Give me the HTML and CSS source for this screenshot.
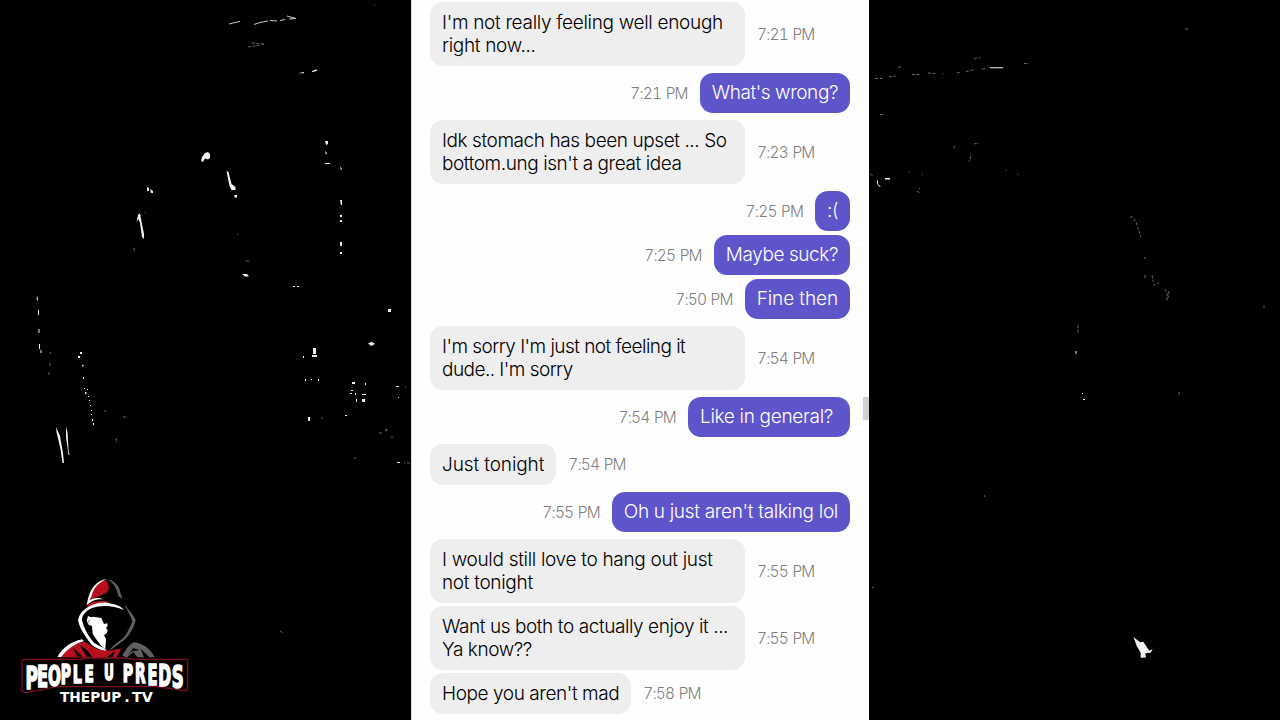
FILE: index.html
```html
<!DOCTYPE html>
<html lang="en">
<head>
    <meta charset="UTF-8">
    <meta name="viewport" content="width=device-width, initial-scale=1.0">
    <title>Chat</title>
    <link rel="stylesheet" href="styles.css">
</head>
<body>
    <div class="stage">
        <!-- light specks on the dark backdrop -->
        <svg class="backdrop" width="1280" height="720" viewBox="0 0 1280 720">
            <g class="bright">
                <path d="M201 161l1-4 3-4 3-1 2 2 0 4-2 1.500-3-1-2 3.500z"/>
                <path d="M226.500 171l2 1 3 12 4 3 0 3-4 0-2-4z"/>
                <path d="M234.500 195h2.500v2.500h-2.500zM136.500 222l1.500-7 2-2 1 6 3 15 0 5-2-2-2-14-1.500-4z"/>
                <path d="M242 274l5 0 2 2.500-4 0zM147 187l2 1v3h-2zM150 189l3 2v2h-2zM293 286h2v1h-2zM297 286h2v1h-2z"/>
                <path d="M312 71l4-1.500 2 .5-3 1.500-3 .5zM299 73l5-1v1.300h-5z"/>
                <path d="M325 141h3v3l-2 1zM325 151l2 2-1 2zM325 163h5v1h-5zM340 166l2 3-1 1zM340 200h2v5h-1zM340 215h2v2h-2zM340 220h2v2h-2zM340 242h2v3l-1 2-1-2zM340 252h2v2h-2z"/>
                <path d="M313 348h3v6h-3zM312 355h5v2h-5zM303 356h1v2h-1zM305 379h1v2h-1zM311 379h1v1h-1zM318 379h1v2h-1zM308 417h2v4h-2zM388 309h3v3h-3zM368 343l4-1 3 2-4 2z"/>
                <path d="M352 382h3v2h-3zM351 390h2v1h-2zM350 393h2v1h-2zM355 393h1v2h-1zM362 394h4v1h-4zM362 399h3v3h-3zM356 399h1v3h-1zM365 383h1v2h-1zM345 415h2v1h-2zM396 386h3v1h-3zM398 397h1v1h-1zM397 462h3v1h-3z"/>
                <path d="M56 427l4 9 3 17 1 10-1.500 0-2-14-4-17zM66 427l1.500 5 1 18 1 5-1 0-2.500-18z"/>
                <path d="M36.500 298l1-2 .5 5-1-1zM38 310h1v5h-1zM38.500 329h1v4h-1zM39 344h1v5h-1zM40.500 350h1v3h-1z"/>
                <path d="M80 352h2v2h-2zM78 356h2v2h-2zM82 365h1.500v1.500h-1.500zM83 377h1v2h-1zM84 388h1v1h-1zM87 389h1v1h-1zM85 392h1.500v2h-1.500zM88 396h1v1h-1zM89 400h1v1h-1zM90 405h1v1h-1zM91 410h1v1h-1zM91 414h1v1h-1zM92 419h1v2h-1zM93 423h1v2h-1z"/>
                <path d="M877 180l1 1 0 3 3 3-2-.5-2-3zM885 178h5v1.500h-5zM990 67.300h13v1h-13z"/>
                <path d="M1133.500 637l6.500 5.300 3.300-.6 6 9 3.400-1.700-2 3.700-5.400.6.700 4.200-5.300.2 0-5-4-6.700z"/>
                <path d="M1075.500 351h1v3h-1zM1082 393h1v1h-1zM1083 399h2v1h-2z"/>
            </g>
            <g class="streak">
                <path d="M254 24.500l6-2 8-1.500M270 20.500l7 .5M280 20.500l5-1M289 19l7-.5-9-2.500M229 24l6-1.500 5-1"/>
                <path class="dim" d="M248 47l16-2.500M252 43l12 1M374 5l1 0M134 248l.5 3M246 261l4 0M237 234l1 1M145 212l1 1"/>
                <path class="dim" d="M875 78.500h8M889 77l7-1M898 67h4M912 74.500h8M928 73l8 .5M943 73v1M957 73l4-1M966 71.500l9-2M982 69l3 0M1024 63.500h5M974 59l6-1.500M880 114.500h5"/>
                <path class="dim" d="M953 148l3-2M974 144l5-1M971 156l-2 6M970 154l1 1M909 172l1 1M922 174l1 1M917 191l3 2M920 188l-1 1M1006 170v1M1018 174v1M870 174l4 2"/>
                <path class="dim" d="M1130 217l2 0 4 5 2 6 3 9M1145 257v2M1145 275v3M1152 275l2 10 5-2M1165 289l2 4v8M1169 291l-1 7M1078 325v9M1264 305v4M1179 392v3M1185 29l3 0M984 495l1 2M872 587l2 1"/>
                <path class="dim" d="M50 352l1 2M50 363v3M49 372v3M105 410v2M123 417h5M116 438l1 5M379 433h4M385 431l3-1M386 428v4M392 436v2M405 387h1M410 463h-6M321 418h2M354 458h2M280 631l3 2"/>
            </g>
        </svg>

        <main class="chat">
            <div class="message received">
                <div class="bubble long">I'm not really feeling well enough<br>right now...</div>
                <span class="time">7:21 PM</span>
            </div>
            <div class="message sent">
                <span class="time">7:21 PM</span>
                <div class="bubble tight">What's wrong?</div>
            </div>
            <div class="message received">
                <div class="bubble long tight">Idk stomach has been upset ... So<br>bottom.ung isn't a great idea</div>
                <span class="time">7:23 PM</span>
            </div>
            <div class="message sent">
                <span class="time">7:25 PM</span>
                <div class="bubble tighter">:(</div>
            </div>
            <div class="message sent">
                <span class="time">7:25 PM</span>
                <div class="bubble tight">Maybe suck?</div>
            </div>
            <div class="message sent">
                <span class="time">7:50 PM</span>
                <div class="bubble wide">Fine then</div>
            </div>
            <div class="message received">
                <div class="bubble long tighter">I'm sorry I'm just not feeling it<br>dude.. I'm sorry</div>
                <span class="time">7:54 PM</span>
            </div>
            <div class="message sent">
                <span class="time">7:54 PM</span>
                <div class="bubble">Like in general?&nbsp;</div>
            </div>
            <div class="message received">
                <div class="bubble wide">Just tonight</div>
                <span class="time">7:54 PM</span>
            </div>
            <div class="message sent">
                <span class="time">7:55 PM</span>
                <div class="bubble">Oh u just aren't talking lol</div>
            </div>
            <div class="message received">
                <div class="bubble long">I would still love to hang out just<br>not tonight</div>
                <span class="time">7:55 PM</span>
            </div>
            <div class="message received">
                <div class="bubble long tight">Want us both to actually enjoy it ...<br>Ya know??</div>
                <span class="time">7:55 PM</span>
            </div>
            <div class="message received">
                <div class="bubble tight">Hope you aren't mad</div>
                <span class="time">7:58 PM</span>
            </div>
            <div class="scrollbar"></div>
        </main>

        <svg class="logo" width="190" height="140" viewBox="0 0 570 420">
            <!-- shoulders -->
            <path class="red" d="M150 262C168 236 192 222 222 215L262 238 292 242 334 236 318 264Z"/>
            <path class="black" d="M188 232l30 28h-16zM208 224c20 12 32 24 38 38h-14zM290 262l24-20-6 20z"/>
            <path class="white" d="M142 261C158 232 184 215 216 208L222 213C194 222 172 236 153 262Z"/>
            <path class="grey" d="M336 258C348 238 358 223 371 217 398 220 422 236 434 262H418L392 236 402 262H382L370 246 352 262Z"/>
            <path class="black" d="M352 258l18-24 18 6-22 4z"/>
            <!-- hood -->
            <path class="black" d="M236 90C245 50 262 30 290 26 330 40 332 70 340 92 366 120 380 150 368 175L300 242 220 180 208 140Z"/>
            <path class="red" d="M242 84C246 54 262 36 287 30 299 44 299 60 290 68 270 76 256 82 242 92ZM234 104C246 94 266 92 288 94L300 100C270 98 248 102 230 114Z"/>
            <path class="white" d="M230 106C236 60 258 30 292 26 268 36 250 52 244 80L238 90 C256 82 268 82 280 88 256 86 242 94 228 108Z"/>
            <path class="white" d="M204 150C212 116 250 96 290 98 316 102 334 108 342 120 310 106 274 104 246 114 226 124 216 136 216 150 222 178 238 202 252 218 270 230 284 232 290 242 266 240 246 230 234 210 220 190 208 172 204 150Z"/>
            <path class="grey" d="M292 27C318 34 328 50 331 68L338 88 325 78C320 56 312 40 292 27ZM342 98C356 122 372 136 377 150 370 180 352 206 334 216 322 226 310 234 298 242 310 224 326 216 342 202 354 184 364 166 367 152 360 134 350 120 342 98Z"/>
            <!-- face -->
            <path class="white" d="M234 138L243 142 250 140 274 144 282 162 292 160 293 168 288 174 293 180 290 190 282 196 288 206 286 238 274 228 262 212 248 192 246 168 236 164 230 152Z"/>
            <path class="black" d="M243 146l-8 8 4 10-2-10z"/>
            <!-- name plate -->
            <path class="plate" d="M44 268H210L230 264H350L370 268H528Q534 270 533 278V356Q532 362 524 362L440 350H140L50 368Q36 368 36 358V276Q36 269 44 268Z"/>
            <text class="name" transform="scale(.58 1)">
                <tspan x="80" y="356" font-size="98">P</tspan><tspan x="140" y="352" font-size="93">E</tspan><tspan x="196" y="347" font-size="87">O</tspan><tspan x="263" y="342" font-size="80">P</tspan><tspan class="broad" x="324" y="338" font-size="74">L</tspan><tspan class="broad" x="385" y="335" font-size="71">E</tspan> <tspan class="broad" x="486" y="330" font-size="63">U</tspan> <tspan class="broad" x="583" y="336" font-size="73">P</tspan><tspan x="646" y="340" font-size="79">R</tspan><tspan x="711" y="344" font-size="84">E</tspan><tspan x="767" y="349" font-size="89">D</tspan><tspan x="837" y="354" font-size="95">S</tspan>
            </text>
            <text class="site"><tspan x="150" y="395" textLength="184" lengthAdjust="spacingAndGlyphs">THEPUP</tspan><tspan x="343">.</tspan><tspan x="366">T</tspan><tspan x="395">V</tspan></text>
        </svg>
    </div>
</body>
</html>
```
FILE: styles.css
```css
:root {
    --sent: #5f55cb;
    --received: #eeeeee;
    --time: #808080;
}

* {
    box-sizing: border-box;
}

body {
    margin: 0;
    background: #000;
    font-family: Inter, "Liberation Sans", sans-serif;
}

.stage {
    position: relative;
    width: 1280px;
    height: 720px;
    overflow: hidden;
    background: #000;
}

.backdrop {
    position: absolute;
    left: 0;
    top: 0;
}

.bright {
    fill: #f2f2f2;
}

.streak {
    fill: none;
    stroke: #c8c8c8;
    stroke-width: 1;
}

.dim {
    stroke: #666;
    stroke-dasharray: 3 1.5;
}

.chat {
    position: relative;
    width: 458px;
    height: 720px;
    margin-left: 411px;
    padding: 2px 19px 0 18px;
    background: #fefefe;
    border-left: 1px solid #dedede;
}

.message {
    display: flex;
    align-items: center;
    gap: 12px;
    margin-bottom: 3.5px;
}

.sent {
    justify-content: flex-end;
}

.received + .sent,
.sent + .received {
    margin-top: 7px;
}

.bubble {
    padding: 8.75px 12px;
    border-radius: 13px;
    font-size: 19px;
    font-weight: 330;
    line-height: 23px;
    letter-spacing: -0.31px;
    white-space: nowrap;
}

.received .bubble {
    background: var(--received);
    color: #000;
}

.sent .bubble {
    background: var(--sent);
    color: #fff;
}

.long {
    width: 315px;
}

.bubble.tight {
    letter-spacing: -0.42px;
}

.bubble.tighter {
    letter-spacing: -0.54px;
}

.bubble.wide {
    letter-spacing: -0.1px;
}

.time {
    padding-top: 1px;
    color: var(--time);
    font-size: 15.5px;
    font-weight: 330;
    font-variant-numeric: tabular-nums;
    letter-spacing: -0.8px;
    word-spacing: 1px;
    white-space: nowrap;
}

.scrollbar {
    position: absolute;
    right: 0;
    top: 397px;
    width: 6px;
    height: 23px;
    background: #d2d2d2;
}

.logo {
    position: absolute;
    left: 10px;
    top: 570px;
}

.red {
    fill: #b80f1c;
}

.white {
    fill: #fff;
}

.grey {
    fill: #606060;
}

.black {
    fill: #000;
}

.plate {
    fill: #050002;
    stroke: #7c1020;
    stroke-width: 4;
}

.name {
    fill: #fff;
    stroke: #fff;
    stroke-width: 5;
    font-family: "DejaVu Sans Condensed", "DejaVu Sans", sans-serif;
    font-stretch: condensed;
    font-weight: bold;
}

.broad {
    font-family: "DejaVu Sans", sans-serif;
    font-stretch: normal;
}

.site {
    fill: #fff;
    font-family: "DejaVu Sans", sans-serif;
    font-size: 43px;
    font-weight: bold;
}
```
